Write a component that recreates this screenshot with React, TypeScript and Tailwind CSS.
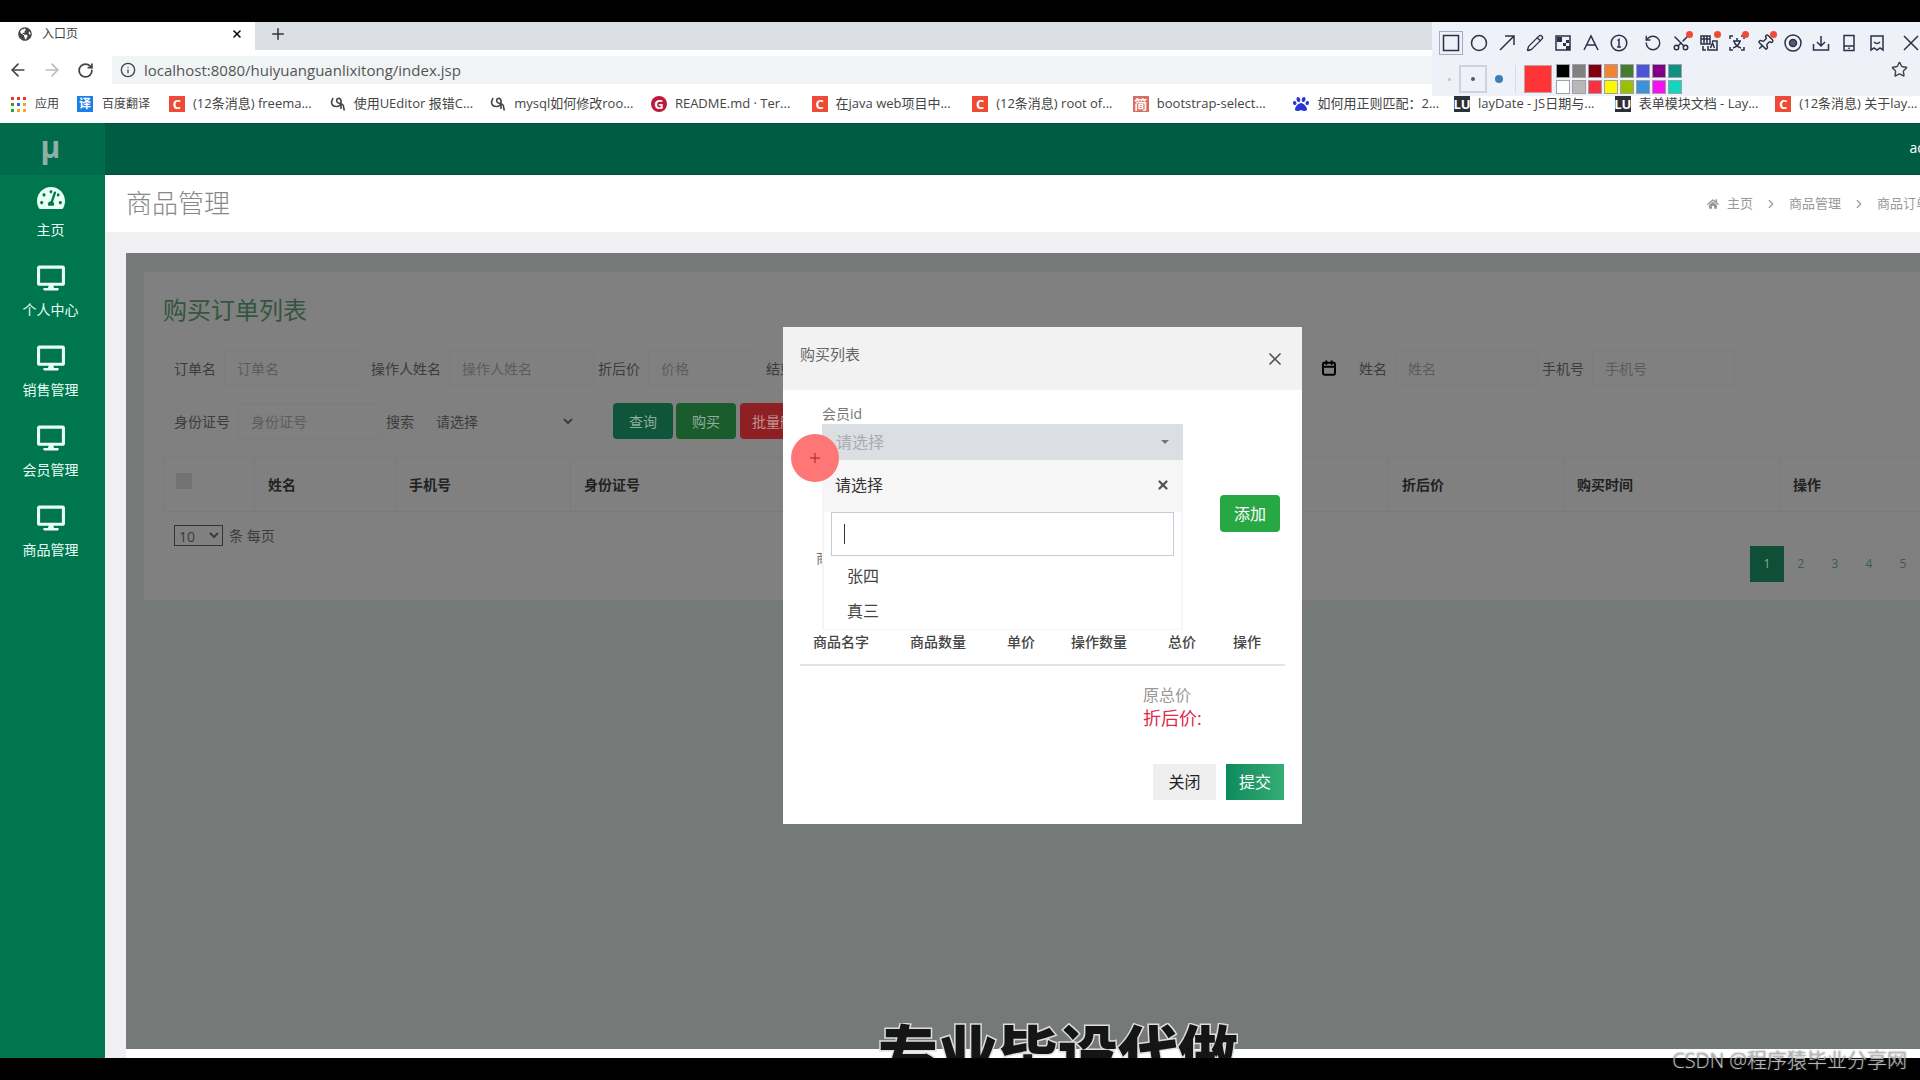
import React from "react";
import { FaTachometerAlt, FaDesktop, FaHome, FaPaw, FaGlobeAmericas } from "react-icons/fa";
import {
  ArrowLeft, ArrowRight, RotateCw, Info, Pencil, RotateCcw, Scissors, Pin, X, Plus, Star,
  Calendar, ChevronRight,
} from "lucide-react";

type Kind = "csdn" | "swirl" | "gitee" | "jian" | "baidu" | "layui";

const bookmarks: { kind: Kind; text: string }[] = [
  { kind: "csdn", text: "(12条消息) freema..." },
  { kind: "swirl", text: "使用UEditor 报错C..." },
  { kind: "swirl", text: "mysql如何修改roo..." },
  { kind: "gitee", text: "README.md · Ter..." },
  { kind: "csdn", text: "在java web项目中..." },
  { kind: "csdn", text: "(12条消息) root of..." },
  { kind: "jian", text: "bootstrap-select..." },
  { kind: "baidu", text: "如何用正则匹配：2..." },
  { kind: "layui", text: "layDate - JS日期与..." },
  { kind: "layui", text: "表单模块文档 - Lay..." },
  { kind: "csdn", text: "(12条消息) 关于lay..." },
];

function Favicon({ kind }: { kind: Kind }) {
  const box = "flex size-4 shrink-0 items-center justify-center text-[13px] leading-none font-bold text-white";
  if (kind === "csdn") return <span className={`${box} bg-[#ee4a35]`}>C</span>;
  if (kind === "gitee") return <span className={`${box} rounded-full bg-[#c0173a]`}>G</span>;
  if (kind === "jian") return <span className={`${box} bg-[#dc6a60] text-[11px]`}>简</span>;
  if (kind === "layui") return <span className={`${box} bg-[#2a3036] text-[10px]`}>LU</span>;
  if (kind === "baidu") return <FaPaw className="size-4 shrink-0 text-[#2a35d8]" />;
  return (
    <svg viewBox="0 0 16 16" className="size-4 shrink-0" fill="none" stroke="#444" strokeWidth="1.6">
      <path d="M3 2 1.500 6c0 3 2 4.500 5 4.500S11 8 11 5.500 9.500 2 8 2.500 6 5 7.500 6.500 12 7 13 9s.5 4 1.500 5.500M11 4v9" />
    </svg>
  );
}

const swatches = [
  "bg-black", "bg-[#808080]", "bg-[#800010]", "bg-[#f58432]", "bg-[#457c32]", "bg-[#4a55d8]", "bg-[#800088]", "bg-[#109080]",
  "bg-white", "bg-[#b8b8b8]", "bg-[#fb3040]", "bg-[#fbf800]", "bg-[#9bc000]", "bg-[#3a92d8]", "bg-[#f810f0]", "bg-[#10d8c0]",
];

function ToolIcon({ children, label, dot, active }: { children: React.ReactNode; label: string; dot?: boolean; active?: boolean }) {
  return (
    <button
      aria-label={label}
      className={`relative flex h-6 w-6 items-center justify-center ${active ? "border border-[#a8a8c8]" : ""}`}
    >
      {children}
      {dot && <span className="absolute top-0 right-0 size-[7px] rounded-full bg-[#ee4a35]" />}
    </button>
  );
}

function Glyph({ d, children }: { d?: string; children?: React.ReactNode }) {
  return (
    <svg viewBox="0 0 18 18" className="size-[18px]" fill="none" stroke="#2c3048" strokeWidth="1.500">
      {d && <path d={d} />}
      {children}
    </svg>
  );
}

function CaptureToolbar() {
  const c = "size-[18px] text-[#2c3048]";
  return (
    <div className="absolute top-[22px] right-0 z-20 h-[74px] w-[488px] overflow-hidden bg-[#eef1f8]">
      <div className="flex w-max items-center gap-1 pt-[9px] pl-[7px]">
        <ToolIcon label="矩形" active><Glyph d="M1.500 1.500h15v15h-15z" /></ToolIcon>
        <ToolIcon label="椭圆"><Glyph><circle cx="9" cy="9" r="7.500" /></Glyph></ToolIcon>
        <ToolIcon label="箭头"><Glyph d="M2 16 16 2M7 2h9v9" /></ToolIcon>
        <ToolIcon label="画笔"><Pencil className={c} strokeWidth={1.800} /></ToolIcon>
        <ToolIcon label="马赛克">
          <Glyph d="M2 2h14v14H2z">
            <path d="M3 3h5v5H3zM9 9h3v3H9zM12 12h4v4h-4zM12 6h3v3h-3z" fill="#2c3048" stroke="none" />
          </Glyph>
        </ToolIcon>
        <ToolIcon label="文字"><Glyph d="M2 16 9 2l7 14M5 11h8" /></ToolIcon>
        <ToolIcon label="序号">
          <Glyph d="M7.500 6.500 9 5.500V13M7 13h4"><circle cx="9" cy="9" r="7.800" /></Glyph>
        </ToolIcon>
        <span className="w-[2px]" />
        <ToolIcon label="撤销"><RotateCcw className={c} strokeWidth={1.800} /></ToolIcon>
        <ToolIcon label="裁剪" dot><Scissors className="size-[18px] -rotate-90 text-[#2c3048]" strokeWidth={2} /></ToolIcon>
        <ToolIcon label="翻译" dot>
          <Glyph d="M1 2h9v8H1zM1 5h9M4 2v8M7 2v8M12 7h5v9H8v-4M10.500 14l2-5 2 5M3 12v4h3" />
        </ToolIcon>
        <ToolIcon label="识别" dot>
          <Glyph d="M2 5V2h3M13 2h3v3M16 13v3h-3M5 16H2v-3M5 7h8M9 4v3M12 7c-1 4-4 6-7 7M6 7c1 4 4 6 7 7" />
        </ToolIcon>
        <ToolIcon label="贴图" dot><Pin className="size-[18px] rotate-45 text-[#2c3048]" strokeWidth={2} /></ToolIcon>
        <ToolIcon label="录制">
          <Glyph><circle cx="9" cy="9" r="8" /><circle cx="9" cy="9" r="3.500" fill="#555a70" /></Glyph>
        </ToolIcon>
        <ToolIcon label="下载"><Glyph d="M9 2v10M5 8l4 4 4-4M1.500 10v6h15v-6" /></ToolIcon>
        <ToolIcon label="手机"><Glyph d="M4 1.500h10v15H4zM4 12h10M9 13.500v1.500" /></ToolIcon>
        <ToolIcon label="收藏"><Glyph d="M3 2h12v14l-3-2-3 2-3-2-3 2zM6 8c2 2 4 2 6 0" /></ToolIcon>
        <span className="w-[2px]" />
        <ToolIcon label="关闭"><Glyph d="m2 2 14 14M16 2 2 16" /></ToolIcon>
      </div>
      <div className="flex items-center pt-[9px] pl-[7px]">
        <button aria-label="细" className="flex h-7 w-5 items-center justify-center"><span className="size-[3px] rounded-full bg-[#c0c4d0]" /></button>
        <button aria-label="中" className="flex h-7 w-7 items-center justify-center border-2 border-[#d0d0de]"><span className="size-1 rounded-full bg-[#555a70]" /></button>
        <button aria-label="粗" className="flex h-7 w-6 items-center justify-center"><span className="size-2 rounded-full bg-[#3a80b8]" /></button>
        <span className="mx-1 h-7 w-px bg-[#d8dae6]" />
        <span className="ml-1 size-7 border border-[#c0a0a0] bg-[#ff3436]" />
        <div className="ml-1 grid grid-cols-8 gap-[2px]">
          {swatches.map((s, i) => (
            <button key={i} aria-label={`颜色 ${i + 1}`} className={`h-[14px] w-[14px] border border-[#a0a0a8] ${s}`} />
          ))}
        </div>
      </div>
    </div>
  );
}

function Browser() {
  return (
    <header className="bg-white text-[#444]">
      <div className="flex h-[28px] bg-[#dcdfe4]">
        <div className="flex w-[255px] items-center bg-white pr-3 pb-1 pl-[18px] text-[12px]">
          <FaGlobeAmericas className="size-[14px] text-[#444]" />
          <span className="ml-[10px] flex-1">入口页</span>
          <button aria-label="关闭标签页"><X className="size-3 text-black" strokeWidth={3} /></button>
        </div>
        <button aria-label="新标签页" className="ml-[14px] flex items-center pb-1"><Plus className="size-[18px] text-[#333]" /></button>
      </div>
      <div className="flex h-[40px] items-center">
        <button aria-label="后退" className="ml-2"><ArrowLeft className="size-5" /></button>
        <button aria-label="前进" className="ml-[14px]"><ArrowRight className="size-5 text-[#bbb]" /></button>
        <button aria-label="刷新" className="ml-[15px]"><RotateCw className="size-[17px]" strokeWidth={2.500} /></button>
        <label className="ml-[18px] flex h-[28px] min-w-0 flex-1 items-center bg-[#f1f4f4] pl-2">
          <Info className="size-4" />
          <input
            aria-label="地址"
            className="ml-2 min-w-0 flex-1 bg-transparent text-[15px] text-[#555] outline-none"
            defaultValue="localhost:8080/huiyuanguanlixitong/index.jsp"
          />
        </label>
      </div>
      <nav className="flex h-[33px] items-center overflow-hidden pb-[5px] text-[12px] whitespace-nowrap">
        <a href="#apps" className="ml-[11px] flex w-[66px] shrink-0 items-center gap-[9px]">
          <svg viewBox="0 0 15 15" className="size-[15px]">
            {["#e33", "#e33", "#e33", "#2a2", "#2a6ae0", "#ea2", "#2a2", "#ea2", "#ea2"].map((f, i) => (
              <rect key={i} x={(i % 3) * 6} y={Math.floor(i / 3) * 6} width="3" height="3" fill={f} />
            ))}
          </svg>
          应用
        </a>
        <a href="#fanyi" className="flex w-[92px] shrink-0 items-center gap-[9px]">
          <span className="flex size-4 items-center justify-center bg-[#1a80e8] text-[12px] font-bold text-white">译</span>
          百度翻译
        </a>
        <div className="-mr-4 grid min-w-0 flex-1 grid-cols-11 text-[13px]">
          {bookmarks.map((b, i) => (
            <a key={i} href="#bookmark" className="flex min-w-0 items-center gap-2">
              <Favicon kind={b.kind} />
              <span>{b.text}</span>
            </a>
          ))}
        </div>
        <a href="#star" aria-label="收藏此页" className="absolute top-[61px] right-[12px] z-30"><Star className="size-[17px]" /></a>
      </nav>
    </header>
  );
}

function Sidebar() {
  return (
    <aside className="flex w-[105px] shrink-0 flex-col bg-[#00764f] text-[#e8fff4]">
      <div className="flex h-[52px] items-center justify-center bg-[#006b4a] pr-1 pb-1 text-[30px] leading-none font-bold text-[#8fb0a4]">µ</div>
      <nav className="flex flex-col pr-1 text-center text-[14px] leading-5">
        {["主页", "个人中心", "销售管理", "会员管理", "商品管理"].map((t, i) => (
          <a key={t} href="#menu" className="flex h-[80px] flex-col items-center pt-[9px]">
            {i === 0 ? <FaTachometerAlt className="size-[28px]" /> : <FaDesktop className="size-[28px]" />}
            <span className="mt-[8px]">{t}</span>
          </a>
        ))}
      </nav>
    </aside>
  );
}

function Field({ label, hint, width }: { label: string; hint: string; width: string }) {
  return (
    <label className="flex shrink-0 items-center">
      {label}
      <input
        placeholder={hint}
        className={`ml-2 h-9 border border-[#7c7c7c] bg-transparent pl-[12px] text-[14px] outline-none placeholder:text-[#5c5c5c] ${width}`}
      />
    </label>
  );
}

function OrderCard() {
  const btn = "h-[36px] rounded-sm text-[14px]";
  return (
    <section className="mt-[19px] -mr-8 ml-[18px] h-[328px] overflow-hidden bg-[#808080] pt-[20px] pl-[19px] text-[14px] text-[#3c3c3c]">
      <h2 className="text-[24px] leading-9 text-[#33553f]">购买订单列表</h2>
      <div className="mt-[22px] flex h-9 items-center pl-[11px]">
        <Field label="订单名" hint="订单名" width="w-[142px]" />
        <span className="w-[5px] shrink-0" />
        <Field label="操作人姓名" hint="操作人姓名" width="w-[145px]" />
        <span className="w-1 shrink-0" />
        <Field label="折后价" hint="价格" width="w-[110px]" />
        <span className="ml-[8px] w-[555px] shrink-0">结束</span>
        <Calendar className="mr-[22px] size-4 shrink-0 text-black" strokeWidth={3} />
        <Field label="姓名" hint="姓名" width="w-[143px]" />
        <span className="w-1 shrink-0" />
        <Field label="手机号" hint="手机号" width="w-[143px]" />
      </div>
      <div className="mt-[17px] flex h-9 items-center pl-[11px]">
        <Field label="身份证号" hint="身份证号" width="w-[144px]" />
        <label className="flex items-center">
          <span className="ml-1">搜索</span>
          <select className="ml-[18px] h-9 w-[144px] bg-transparent text-[14px]">
            <option>请选择</option>
          </select>
        </label>
        <button className={`${btn} ml-[37px] w-[60px] bg-[#0f553b] text-[#8fae9e]`}>查询</button>
        <button className={`${btn} ml-[3px] w-[60px] bg-[#1a5c2c] text-[#8fae9e]`}>购买</button>
        <button className={`${btn} ml-1 w-[80px] bg-[#8e2024] text-[#c09090]`}>批量删除</button>
      </div>
      <table className="mt-[18px] w-full table-fixed border border-[#7b7b7b] text-left text-[14px] text-[#222]">
        <colgroup>
          <col className="w-[91px]" /><col className="w-[141px]" /><col className="w-[175px]" /><col className="w-[280px]" />
          <col className="w-[270px]" /><col className="w-[268px]" /><col className="w-[175px]" /><col className="w-[216px]" /><col />
        </colgroup>
        <thead>
          <tr className="h-[54px]">
            <th className="border border-[#7b7b7b] pb-2 pl-3">
              <input type="checkbox" aria-label="全选" className="block size-4 appearance-none bg-[#737373]" />
            </th>
            {["姓名", "手机号", "身份证号", "", "", "折后价", "购买时间", "操作"].map((t, i) => (
              <th key={i} className="border border-[#7b7b7b] pl-[13px] font-bold">{t}</th>
            ))}
          </tr>
        </thead>
      </table>
      <div className="mt-[13px] flex items-center pl-[11px]">
        <select aria-label="每页条数" className="h-[21px] w-[49px] border border-[#333] bg-transparent text-[14px]">
          <option>10</option>
        </select>
        <span className="ml-[6px]">条 每页</span>
      </div>
      <nav className="flex justify-end pr-3">
        <div className="flex w-[190px] text-[12px]">
          <button className="h-[36px] w-[34px] bg-[#0f4f38] text-[#8fae9e]">1</button>
          {["2", "3", "4", "5"].map((p) => (
            <button key={p} className="h-[36px] w-[34px] text-[#3c5c50]">{p}</button>
          ))}
        </div>
      </nav>
    </section>
  );
}

function PurchaseDialog() {
  return (
    <div role="dialog" aria-label="购买列表" className="absolute top-[327px] left-[783px] z-10 w-[519px] bg-white pb-[24px] text-[#444]">
      <div className="flex h-[63px] items-center justify-between bg-[#f2f2f2] px-[17px]">
        <h3 className="pb-2 text-[15px] text-[#666]">购买列表</h3>
        <button aria-label="关闭"><X className="size-5 text-[#555]" /></button>
      </div>
      <div className="relative flex h-[235px] justify-between pt-[14px] pr-[22px] pl-[39px]">
        <div className="w-[361px]">
          <label className="block h-5 text-[14px] leading-5 text-[#777]" htmlFor="member">会员id</label>
          <button id="member" className="flex h-[36px] w-full items-center justify-between bg-[#dbdfe3] px-[14px] text-[16px] text-[#a8acb0]">
            请选择
            <span className="border-x-4 border-t-4 border-x-transparent border-t-[#777]" />
          </button>
        </div>
        <button className="mt-[91px] h-[37px] w-[60px] rounded-sm bg-[#28a745] text-[16px] text-white">添加</button>
        <span className="absolute top-[157px] left-[33px] text-[14px] text-[#777]">商品</span>
        <div className="absolute top-[70px] left-[39px] w-[361px] border-x-2 border-b border-[#f4f5f8] bg-white text-[16px]">
          <div className="flex h-[52px] items-center justify-between bg-[#f6f6f6] pr-[11px] pb-[2px] pl-[11px] text-[#333]">
            请选择
            <button aria-label="收起"><X className="size-[14px] text-[#555]" strokeWidth={4} /></button>
          </div>
          <div className="mx-[7px] flex h-[44px] items-center border border-[#c0cdd8] pl-[12px]">
            <span className="h-5 w-px bg-[#333]" />
            <input aria-label="搜索会员" className="min-w-0 flex-1 bg-transparent outline-none" />
          </div>
          <ul className="pt-[3px] pl-[23px] leading-[35px]">
            <li>张四</li>
            <li>真三</li>
          </ul>
        </div>
      </div>
      <div className="mx-[17px] border-b-2 border-[#e2e2e2]">
        <table className="w-full table-fixed text-left text-[14px] text-[#444]">
          <colgroup>
            <col className="w-[97px]" /><col className="w-[97px]" /><col className="w-[64px]" />
            <col className="w-[97px]" /><col className="w-[65px]" /><col />
          </colgroup>
          <thead>
            <tr className="h-[39px]">
              {["商品名字", "商品数量", "单价", "操作数量", "总价", "操作"].map((t, i) => (
                <th key={i} className="pb-[6px] pl-[13px] font-medium">{t}</th>
              ))}
            </tr>
          </thead>
        </table>
      </div>
      <div className="mt-[18px] pl-[360px]">
        <p className="text-[16px] leading-[22px] text-[#999]">原总价</p>
        <p className="text-[18px] leading-6 text-[#e0284c]">折后价:</p>
      </div>
      <div className="mt-[34px] flex justify-end gap-[10px] pr-[18px] text-[16px]">
        <button className="h-[36px] w-[63px] bg-[#efeff0] text-[#222]">关闭</button>
        <button className="h-[36px] w-[58px] bg-linear-to-r from-[#0b8a5c] to-[#34ad75] text-white">提交</button>
      </div>
      <div className="absolute top-[107px] left-[8px] flex size-12 items-center justify-center rounded-full bg-[#ff7676]">
        <Plus className="size-4 text-[#a02030]" strokeWidth={1.500} />
      </div>
    </div>
  );
}

export default function App() {
  return (
    <div className="relative flex min-h-screen flex-col overflow-hidden bg-black pt-[22px] font-['Open_Sans','Noto_Sans_CJK_SC',sans-serif]">
      <Browser />
      <CaptureToolbar />
      <div className="flex flex-1">
        <Sidebar />
        <div className="flex min-w-0 flex-1 flex-col overflow-hidden bg-[#f0f0f2]">
          <div className="flex h-[52px] items-center justify-end overflow-hidden border-y border-[#064c36] bg-[#005c42] text-[14px] text-white">
            <span className="-mr-[31px] pb-1">admin</span>
          </div>
          <div className="flex h-[57px] shrink-0 items-center justify-between overflow-hidden bg-white pl-[21px] whitespace-nowrap">
            <h1 className="text-[26px] font-light text-[#888]">商品管理</h1>
            <nav className="-mr-[35px] flex items-center text-[13px] text-[#999]">
              <FaHome className="size-3" />
              <a href="#home" className="ml-2">主页</a>
              <ChevronRight className="mx-[11px] size-[14px]" />
              <a href="#goods">商品管理</a>
              <ChevronRight className="mx-[11px] size-[14px]" />
              <a href="#orders">商品订单管理</a>
            </nav>
          </div>
          <main className="mt-[21px] ml-[21px] flex-1 overflow-hidden border-b-9 border-white bg-[#757978]">
            <OrderCard />
          </main>
        </div>
      </div>
      <PurchaseDialog />
      <div className="relative h-[22px] shrink-0 bg-black">
        <div className="absolute bottom-[22px] left-1/2 -ml-[82px] h-[35px] overflow-hidden text-[60px] leading-[60px] font-black whitespace-nowrap text-[#151515] [-webkit-text-stroke:3px_#ddd] [paint-order:stroke_fill]">
          专业毕设代做
        </div>
        <span className="absolute right-[13px] bottom-[4px] text-[20px] leading-[30px] font-light whitespace-nowrap text-[#b8b8b8] [text-shadow:0_0_2px_#555]">
          CSDN @程序猿毕业分享网
        </span>
      </div>
    </div>
  );
}
